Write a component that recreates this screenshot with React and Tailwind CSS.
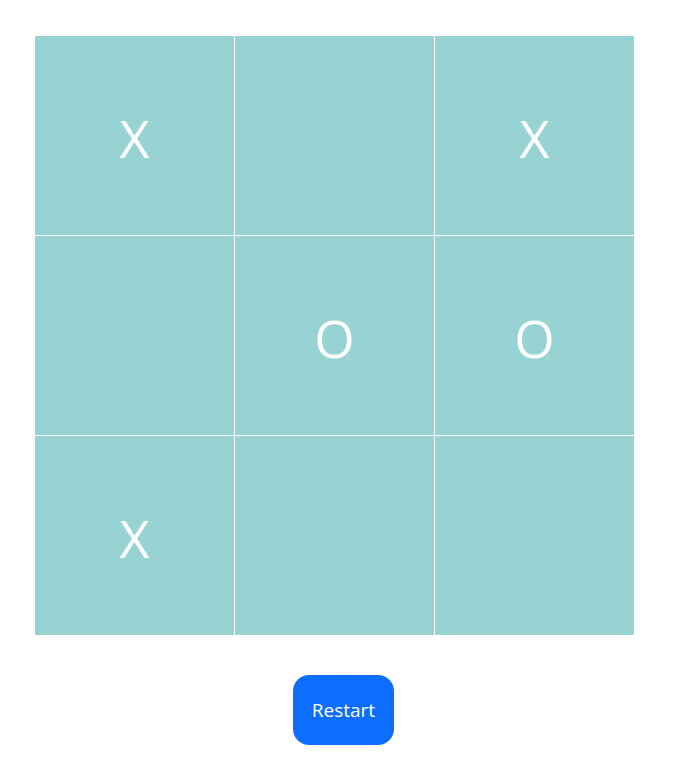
const BOARD = ['X', '', 'X', '', 'O', 'O', 'X', '', '']

export default function App() {
  return (
    <div className="min-h-screen bg-white pt-[36px] font-['Open_Sans',sans-serif]">
      <div className="ml-[35px] grid w-[599px] grid-cols-[repeat(3,199px)] gap-px bg-white">
        {BOARD.map((v, i) => (
          <div
            key={i}
            className="flex h-[199px] items-center justify-center bg-[#97d3d3] text-[52px] leading-none text-white"
          >
            <span className="translate-y-[2px]">{v}</span>
          </div>
        ))}
      </div>

      <div className="mt-[40px] flex w-[687px] justify-center">
        <button className="h-[70px] w-[101px] rounded-[16px] bg-[#0d6efd] text-[19px] text-white">
          Restart
        </button>
      </div>
    </div>
  )
}
